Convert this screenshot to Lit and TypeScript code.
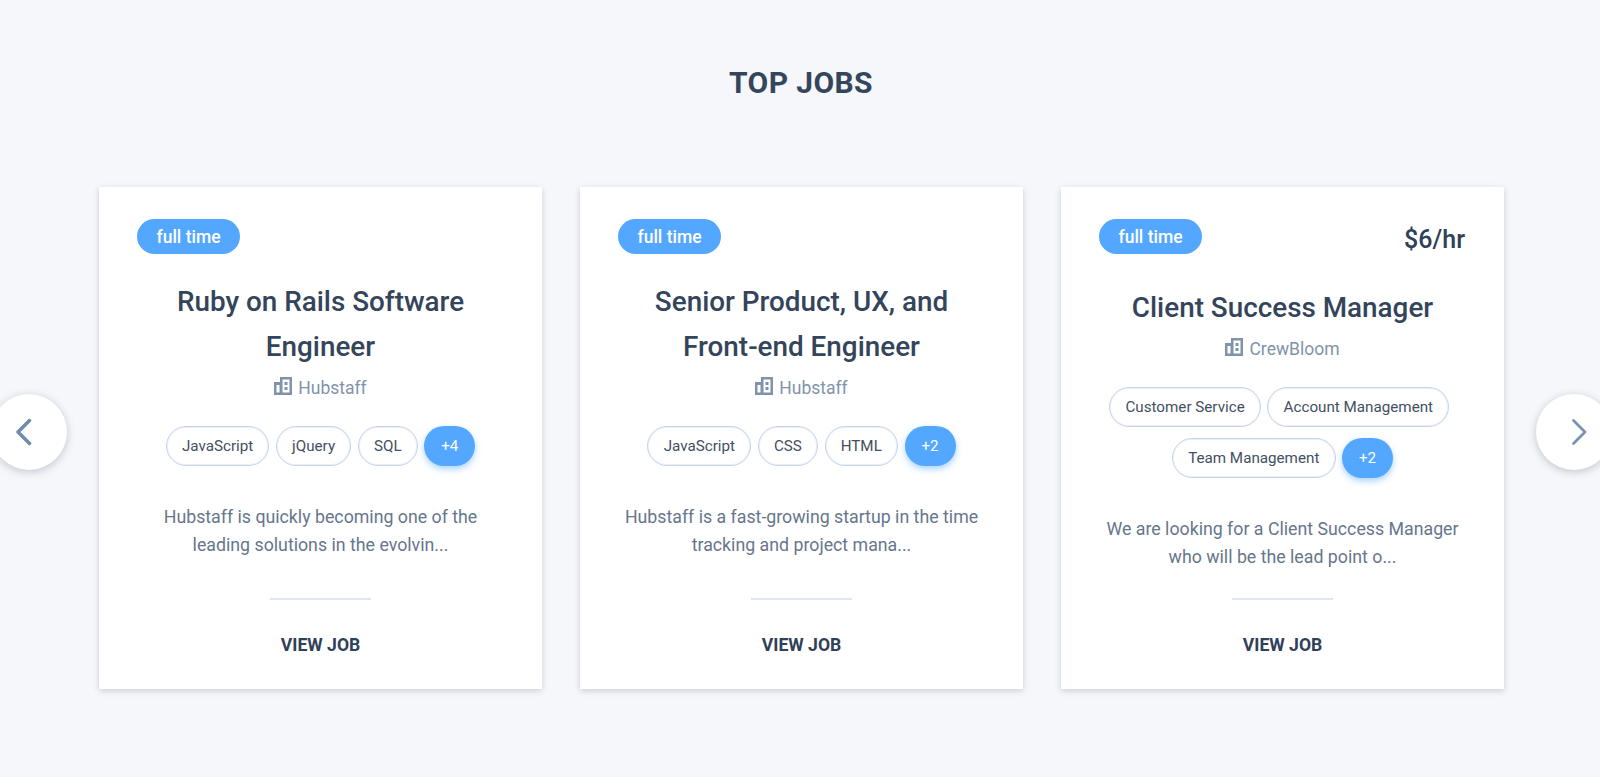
import { html, css, LitElement } from "lit";
import { customElement } from "lit/decorators.js";

interface Job {
    title: string;
    company: string;
    rate?: string;
    tags: string[];
    more: number;
    description: string;
}

const JOBS: Job[] = [
    {
        title: "Ruby on Rails Software Engineer",
        company: "Hubstaff",
        tags: ["JavaScript", "jQuery", "SQL"],
        more: 4,
        description: "Hubstaff is quickly becoming one of the leading solutions in the evolvin...",
    },
    {
        title: "Senior Product, UX, and Front-end Engineer",
        company: "Hubstaff",
        tags: ["JavaScript", "CSS", "HTML"],
        more: 2,
        description: "Hubstaff is a fast-growing startup in the time tracking and project mana...",
    },
    {
        title: "Client Success Manager",
        company: "CrewBloom",
        rate: "$6/hr",
        tags: ["Customer Service", "Account Management", "Team Management"],
        more: 2,
        description: "We are looking for a Client Success Manager who will be the lead point o...",
    },
];

@customElement("app-root")
export class AppRoot extends LitElement {
    static styles = css`
    :host {
        display: block;
        height: 777px;
        overflow: hidden;
        position: relative;
        background: #f5f7fb;
        font-family: Roboto, "Liberation Sans", sans-serif;
        color: #2f4058;
    }
    .heading {
        margin: 0;
        padding: 66px 0 0 2px;
        text-align: center;
        font-size: 30px;
        line-height: 34px;
        font-weight: 700;
        color: #35465c;
        letter-spacing: 0.4px;
    }
    .cards {
        display: flex;
        gap: 38px;
        margin: 87px 0 0 99px;
    }
    .card {
        width: 443px;
        height: 502px;
        box-sizing: border-box;
        padding: 32px 38px 0;
        background: #fff;
        box-shadow: 0 2px 6px rgba(60, 70, 90, 0.22);
        display: flex;
        flex-direction: column;
        align-items: center;
        text-align: center;
    }
    .top {
        align-self: stretch;
        display: flex;
        justify-content: space-between;
        align-items: flex-start;
    }
    .badge {
        height: 35px;
        line-height: 36px;
        padding: 0 19.5px;
        border-radius: 18px;
        background: #53a7ff;
        color: #fff;
        font-size: 17.5px;
        font-weight: 500;
    }
    .rate {
        height: 41px;
        font-size: 25px;
        font-weight: 500;
        line-height: 42px;
        margin-right: 1px;
        color: #2f4058;
    }
    .title {
        margin: 25px 0 0;
        max-width: 340px;
        font-size: 27.85px;
        line-height: 45px;
        font-weight: 500;
        color: #33445b;
    }
    .company {
        display: flex;
        align-items: center;
        gap: 6px;
        margin-top: 4.5px;
        height: 28px;
        font-size: 17.5px;
        color: #8093ab;
    }
    .company svg {
        width: 18px;
        height: 18px;
        margin-top: -3px;
    }
    .tags {
        display: flex;
        flex-wrap: wrap;
        justify-content: center;
        row-gap: 11px;
        margin-top: 24.5px;
    }
    .tag {
        height: 40px;
        line-height: 38px;
        box-sizing: border-box;
        margin-right: 6.5px;
        padding: 0 15.2px;
        border: 1px solid #c5d4ec;
        box-shadow: inset 0 0 0 1px rgba(197, 212, 236, 0.35);
        border-radius: 20px;
        font-size: 15.2px;
        color: #434f63;
    }
    .more {
        height: 40px;
        line-height: 40px;
        width: 51px;
        border-radius: 20px;
        background: #53a7ff;
        color: #fff;
        font-size: 15.2px;
        box-shadow: 0 3px 6px rgba(83, 167, 255, 0.5);
    }
    .description {
        margin: 36.5px 0 0;
        font-size: 17.75px;
        line-height: 28.6px;
        color: #66768c;
    }
    .footer {
        margin-top: auto;
        display: flex;
        flex-direction: column;
        align-items: center;
    }
    .divider {
        width: 101px;
        height: 2px;
        background: #dfe5f5;
    }
    .view {
        margin: 35px 0 34px;
        font-size: 17.6px;
        line-height: 20px;
        font-weight: 700;
        color: #2f4058;
    }
    .nav {
        position: absolute;
        top: 394px;
        width: 76px;
        height: 76px;
        box-sizing: border-box;
        border-radius: 50%;
        background: #fff;
        box-shadow: 0 2px 8px rgba(60, 70, 90, 0.28);
        display: flex;
        align-items: center;
    }
    .nav.prev { left: -9px; padding-left: 24.5px; }
    .nav.next { right: -12px; padding-left: 35px; }
    .nav svg { width: 16px; height: 28px; }
    `;

    renderCard(job: Job) {
        return html`
        <div class="card">
            <div class="top">
                <span class="badge">full time</span>
                ${job.rate ? html`<span class="rate">${job.rate}</span>` : ""}
            </div>
            <h3 class="title">${job.title}</h3>
            <div class="company">
                <svg viewBox="0 0 18 18" fill="#8093ab" fill-rule="evenodd">
                    <path d="M0 5h6V0h12v18H0zM2.500 8v7.500h3V8zM8.500 2.500v13h7v-13zM10.500 5h3v3h-3zM10.500 10h3v3h-3z"/>
                </svg>
                ${job.company}
            </div>
            <div class="tags">
                ${job.tags.map((t) => html`<span class="tag">${t}</span>`)}
                <span class="more">+${job.more}</span>
            </div>
            <p class="description">${job.description}</p>
            <div class="footer">
                <div class="divider"></div>
                <div class="view">VIEW JOB</div>
            </div>
        </div>
        `;
    }

    render() {
        return html`
        <h2 class="heading">TOP JOBS</h2>
        <div class="cards">
            ${JOBS.map((j) => this.renderCard(j))}
        </div>
        <div class="nav prev">
            <svg viewBox="0 0 16 28" fill="none" stroke="#6f8bab" stroke-width="3.500" stroke-linecap="round" stroke-linejoin="round">
                <path d="M13.500 2.500L2 14l11.500 11.500"/>
            </svg>
        </div>
        <div class="nav next">
            <svg viewBox="0 0 16 28" fill="none" stroke="#7a92ae" stroke-width="2.800" stroke-linecap="round" stroke-linejoin="round">
                <path d="M2.500 2.500L14 14 2.500 25.500"/>
            </svg>
        </div>
        `;
    }
}
